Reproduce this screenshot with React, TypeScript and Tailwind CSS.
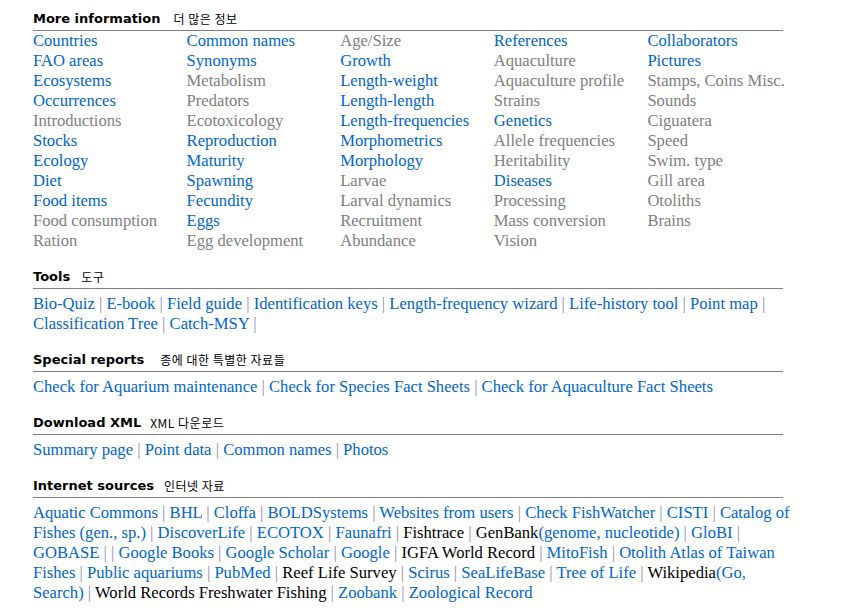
import React from 'react';

const BLUE = 'text-[#0066cc]';
const GRAY = 'text-[#808080]';

type Cell = [string, boolean];

const columns: Cell[][] = [
  [
    ['Countries', true], ['FAO areas', true], ['Ecosystems', true], ['Occurrences', true],
    ['Introductions', false], ['Stocks', true], ['Ecology', true], ['Diet', true],
    ['Food items', true], ['Food consumption', false], ['Ration', false],
  ],
  [
    ['Common names', true], ['Synonyms', true], ['Metabolism', false], ['Predators', false],
    ['Ecotoxicology', false], ['Reproduction', true], ['Maturity', true], ['Spawning', true],
    ['Fecundity', true], ['Eggs', true], ['Egg development', false],
  ],
  [
    ['Age/Size', false], ['Growth', true], ['Length-weight', true], ['Length-length', true],
    ['Length-frequencies', true], ['Morphometrics', true], ['Morphology', true], ['Larvae', false],
    ['Larval dynamics', false], ['Recruitment', false], ['Abundance', false],
  ],
  [
    ['References', true], ['Aquaculture', false], ['Aquaculture profile', false], ['Strains', false],
    ['Genetics', true], ['Allele frequencies', false], ['Heritability', false], ['Diseases', true],
    ['Processing', false], ['Mass conversion', false], ['Vision', false],
  ],
  [
    ['Collaborators', true], ['Pictures', true], ['Stamps, Coins Misc.', false], ['Sounds', false],
    ['Ciguatera', false], ['Speed', false], ['Swim. type', false], ['Gill area', false],
    ['Otoliths', false], ['Brains', false],
  ],
];

function Heading({ title, ko, gap }: { title: string; ko: string; gap: string }) {
  return (
    <div className="w-[750px] flex items-end border-b border-[#808080] pb-[3px] leading-4">
      <span className="font-['DejaVu_Sans',sans-serif] font-bold text-[13px] text-black">{title}</span>
      <span
        className={`${gap} font-['Noto_Sans_CJK_KR','Noto_Sans',sans-serif] text-[12px] tracking-[0.5px] text-black leading-4`}
      >
        {ko}
      </span>
    </div>
  );
}

function Sep() {
  return <span className="text-[#8c8cae]">|</span>;
}

function LinkLine({ items, trailing }: { items: React.ReactNode[]; trailing?: boolean }) {
  return (
    <p className="mt-[5px] w-[762px] text-[16.6px] leading-5">
      {items.map((it, i) => (
        <React.Fragment key={i}>
          {i > 0 && (
            <>
              {' '}
              <Sep />{' '}
            </>
          )}
          {it}
        </React.Fragment>
      ))}
      {trailing && (
        <>
          {' '}
          <Sep />
        </>
      )}
    </p>
  );
}

const b = (t: string) => <span className={BLUE}>{t}</span>;
const k = (t: string) => <span className="text-black">{t}</span>;

export default function App() {
  return (
    <div className="min-h-screen bg-white pl-[33px] pt-[11px] font-['Liberation_Serif','Times_New_Roman',serif]">
      {/* More information */}
      <Heading title="More information" ko="더 많은 정보" gap="ml-[13px]" />
      <div className="grid grid-cols-5 w-[768px] text-[16.6px] leading-5">
        {columns.map((col, ci) => (
          <div key={ci} className="flex flex-col">
            {col.map(([t, link]) => (
              <span key={t} className={`whitespace-nowrap ${link ? BLUE : GRAY}`}>
                {t}
              </span>
            ))}
          </div>
        ))}
      </div>

      {/* Tools */}
      <div className="mt-[18px]">
        <Heading title="Tools" ko="도구" gap="ml-[11px]" />
        <LinkLine
          trailing
          items={[
            b('Bio-Quiz'), b('E-book'), b('Field guide'), b('Identification keys'),
            b('Length-frequency wizard'), b('Life-history tool'), b('Point map'),
            b('Classification Tree'), b('Catch-MSY'),
          ]}
        />
      </div>

      {/* Special reports */}
      <div className="mt-[18px]">
        <Heading title="Special reports" ko="종에 대한 특별한 자료들" gap="ml-[16px]" />
        <LinkLine
          items={[
            b('Check for Aquarium maintenance'),
            b('Check for Species Fact Sheets'),
            b('Check for Aquaculture Fact Sheets'),
          ]}
        />
      </div>

      {/* Download XML */}
      <div className="mt-[18px]">
        <Heading title="Download XML" ko="XML 다운로드" gap="ml-[9px]" />
        <LinkLine items={[b('Summary page'), b('Point data'), b('Common names'), b('Photos')]} />
      </div>

      {/* Internet sources */}
      <div className="mt-[18px]">
        <Heading title="Internet sources" ko="인터넷 자료" gap="ml-[10px]" />
        <LinkLine
          items={[
            b('Aquatic Commons'), b('BHL'), b('Cloffa'), b('BOLDSystems'), b('Websites from users'),
            b('Check FishWatcher'), b('CISTI'), b('Catalog of Fishes (gen., sp.)'), b('DiscoverLife'),
            b('ECOTOX'), b('Faunafri'), k('Fishtrace'),
            <span>
              {k('GenBank')}
              {b('(genome, nucleotide)')}
            </span>,
            b('GloBI'), b('GOBASE'), null, b('Google Books'), b('Google Scholar'), b('Google'),
            k('IGFA World Record'), b('MitoFish'), b('Otolith Atlas of Taiwan Fishes'),
            b('Public aquariums'), b('PubMed'), k('Reef Life Survey'), b('Scirus'), b('SeaLifeBase'),
            b('Tree of Life'),
            <span>
              {k('Wikipedia')}
              {b('(Go, Search)')}
            </span>,
            k('World Records Freshwater Fishing'), b('Zoobank'), b('Zoological Record'),
          ]}
        />
      </div>
    </div>
  );
}
